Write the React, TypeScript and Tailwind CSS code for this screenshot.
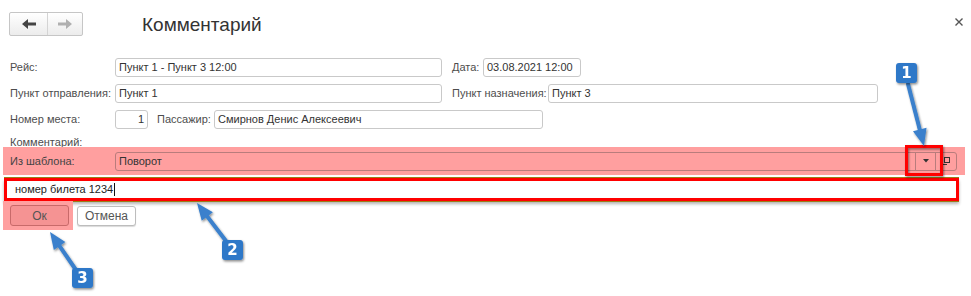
import React from 'react';

const font = { fontFamily: '"Liberation Sans", Arial, sans-serif' };

type ArrowProps = { x1: number; y1: number; x2: number; y2: number };

const Arrow: React.FC<ArrowProps> = ({ x1, y1, x2, y2 }) => {
  const dx = x2 - x1;
  const dy = y2 - y1;
  const len = Math.hypot(dx, dy);
  const ux = dx / len;
  const uy = dy / len;
  const px = -uy;
  const py = ux;
  const hl = 17;
  const hw = 7;
  const bx = x2 - ux * hl;
  const by = y2 - uy * hl;
  const pts = `${x2},${y2} ${bx + px * hw},${by + py * hw} ${bx - px * hw},${by - py * hw}`;
  return (
    <g filter="url(#shadow)">
      <line x1={x1} y1={y1} x2={bx + ux * 3} y2={by + uy * 3} stroke="#3a80cc" strokeWidth={4} strokeLinecap="round" />
      <polygon points={pts} fill="#3a80cc" />
    </g>
  );
};

const Callout: React.FC<{ x: number; y: number; n: string }> = ({ x, y, n }) => (
  <g filter="url(#shadow)">
    <rect x={x} y={y} width={21} height={20} rx={3} fill="#2f78c8" />
    <text x={x + 10.5} y={y + 15} textAnchor="middle" fill="#fff" fontSize={15} fontWeight={700} fontFamily='"DejaVu Sans", sans-serif'>
      {n}
    </text>
  </g>
);

const Field: React.FC<{ w: string; children?: React.ReactNode; right?: boolean }> = ({ w, children, right }) => (
  <div
    className={`${w} h-[19px] border border-[#c9c9c9] rounded-[3px] bg-white flex items-center px-[3px] text-[11px] text-[#333] ${
      right ? 'justify-end' : ''
    }`}
  >
    {children}
  </div>
);

export default function App() {
  return (
    <div className="relative w-[971px] h-[296px] bg-white overflow-hidden" style={font}>
      {/* Header */}
      <div className="flex items-start h-[58px] pt-[12px]">
        <div className="ml-[9px] flex w-[74px] h-[24px] border border-[#c6c6c6] rounded-[2px] bg-linear-to-b from-white to-[#ececec]">
          <div className="w-[38px] flex items-center justify-center border-r border-[#d4d4d4]">
            <svg width="14" height="10" viewBox="0 0 14 10">
              <polygon points="0,5 6,0 6,3.5 14,3.5 14,6.5 6,6.5 6,10" fill="#444" />
            </svg>
          </div>
          <div className="flex-1 flex items-center justify-center">
            <svg width="14" height="10" viewBox="0 0 14 10">
              <polygon points="14,5 8,0 8,3.5 0,3.5 0,6.5 8,6.5 8,10" fill="#b0b0b0" />
            </svg>
          </div>
        </div>
        <div className="ml-[59px] text-[19px] leading-[26px] text-[#333]">Комментарий</div>
        <div className="ml-auto mr-[8px] mt-[6px]">
          <svg width="8" height="8" viewBox="0 0 8 8">
            <path d="M0.5 0.5 L7.5 7.5 M7.5 0.5 L0.5 7.5" stroke="#555" strokeWidth="1.4" />
          </svg>
        </div>
      </div>

      {/* Rows */}
      <div className="flex flex-col gap-[7px] text-[11px]">
        <div className="flex items-center h-[19px]">
          <div className="w-[115px] pl-[10px] text-[#4d4d4d]">Рейс:</div>
          <Field w="w-[327px]">Пункт 1 - Пункт 3 12:00</Field>
          <div className="ml-[10px] w-[31px] text-[#4d4d4d]">Дата:</div>
          <Field w="w-[98px]">03.08.2021 12:00</Field>
        </div>
        <div className="flex items-center h-[19px]">
          <div className="w-[115px] pl-[10px] text-[#4d4d4d]">Пункт отправления:</div>
          <Field w="w-[327px]">Пункт 1</Field>
          <div className="ml-[10px] w-[96px] text-[#4d4d4d]">Пункт назначения:</div>
          <Field w="w-[330px]">Пункт 3</Field>
        </div>
        <div className="flex items-center h-[19px]">
          <div className="w-[115px] pl-[10px] text-[#4d4d4d]">Номер места:</div>
          <Field w="w-[33px]" right>
            1
          </Field>
          <div className="ml-[9px] w-[57px] text-[#4d4d4d]">Пассажир:</div>
          <Field w="w-[329px]">Смирнов Денис Алексеевич</Field>
        </div>
      </div>

      <div className="mt-[7px] h-[11px] overflow-hidden pl-[10px] text-[11px] leading-[13px] text-[#4d4d4d]">Комментарий:</div>

      {/* Template band */}
      <div className="ml-[3px] w-[962px] h-[28px] bg-[#ff9f9f] flex items-center text-[11px]">
        <div className="w-[112px] pl-[7px] text-[#444]">Из шаблона:</div>
        <div className="w-[842px] h-[19px] flex border border-[#b97c7c] rounded-[3px]">
          <div className="flex-1 flex items-center pl-[3px] text-[#333]">Поворот</div>
          <div className="w-[20px] flex items-center justify-center border-l border-[#b97c7c]">
            <svg width="6" height="4" viewBox="0 0 6 4">
              <polygon points="0,0 6,0 3,3.5" fill="#333" />
            </svg>
          </div>
          <div className="w-[21px] flex items-center justify-center border-l border-[#b97c7c]">
            <svg width="8" height="8" viewBox="0 0 8 8">
              <rect x="2.5" y="0.5" width="5" height="5" fill="none" stroke="#333" />
              <path d="M0.5 3 V7.5 H5" fill="none" stroke="#333" />
            </svg>
          </div>
        </div>
      </div>

      {/* Comment text */}
      <div className="mt-[3px] ml-[4px] w-[955px] h-[23px] border-[3px] border-[#ff0000] bg-white flex items-center pl-[8px] text-[11px] text-[#222] shadow-[0_-1px_0_#9b7d1a,0_1px_0_#9b7d1a,0_3px_3px_rgba(0,0,0,0.3)]">
        номер билета 1234
        <span className="ml-[1px] w-px h-[13px] bg-[#111]" />
      </div>

      {/* Buttons */}
      <div className="flex items-center text-[11px]">
        <div className="ml-[3px] w-[70px] h-[29px] bg-[#ffa0a0] pl-[7px] pt-[4px]">
          <div className="w-[59px] h-[21px] rounded-[3px] border border-[#c86a6a] bg-[#f59393] flex items-center justify-center text-[#555] text-[12px]">
            Ок
          </div>
        </div>
        <div className="ml-[4px] w-[59px] h-[20px] rounded-[3px] border border-[#bdbdbd] bg-white flex items-center justify-center text-[#555] text-[12px] shadow-[0_1px_1px_rgba(0,0,0,0.15)]">
          Отмена
        </div>
      </div>

      {/* Annotations */}
      <svg className="absolute left-0 top-0 pointer-events-none" width="971" height="296">
        <defs>
          <filter id="shadow" x="-50%" y="-50%" width="200%" height="200%">
            <feDropShadow dx="1" dy="1.5" stdDeviation="1.2" floodColor="#000" floodOpacity="0.45" />
          </filter>
        </defs>
        <rect x="906.5" y="146.5" width="35" height="28" fill="none" stroke="#ff0000" strokeWidth="3" filter="url(#shadow)" />
        <Arrow x1={908} y1={84} x2={924} y2={146} />
        <Callout x={896} y={63} n="1" />
        <Arrow x1={226} y1={241} x2={197} y2={203} />
        <Callout x={222} y={240} n="2" />
        <Arrow x1={76} y1={270} x2={50} y2={232} />
        <Callout x={72} y={268} n="3" />
      </svg>
    </div>
  );
}
